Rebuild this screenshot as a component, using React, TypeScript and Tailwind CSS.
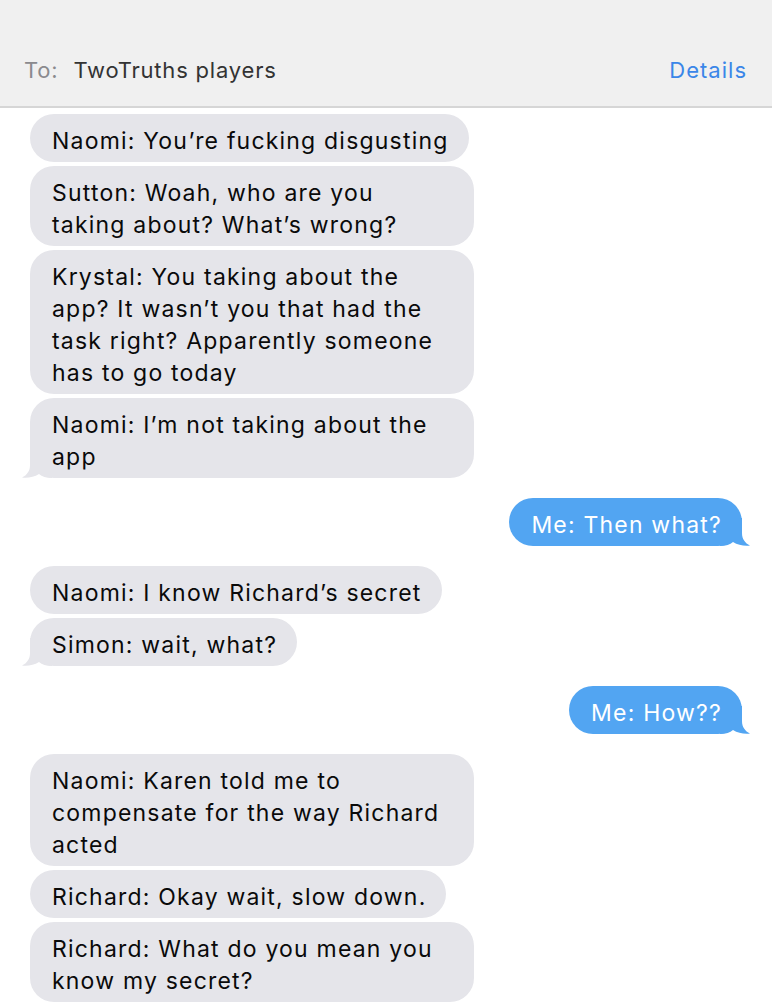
import React from "react";

type Msg = { me?: boolean; lines: string[]; tail?: boolean; wide?: boolean; gapBefore?: boolean };

const msgs: Msg[] = [
  { lines: ["Naomi: You’re fucking disgusting"] },
  { lines: ["Sutton: Woah, who are you", "taking about? What’s wrong?"], wide: true },
  {
    lines: [
      "Krystal: You taking about the",
      "app? It wasn’t you that had the",
      "task right? Apparently someone",
      "has to go today",
    ],
    wide: true,
  },
  { lines: ["Naomi: I’m not taking about the", "app"], wide: true, tail: true },
  { me: true, lines: ["Me: Then what?"], tail: true, gapBefore: true },
  { lines: ["Naomi: I know Richard’s secret"], gapBefore: true },
  { lines: ["Simon: wait, what?"], tail: true },
  { me: true, lines: ["Me: How??"], tail: true, gapBefore: true },
  { lines: ["Naomi: Karen told me to", "compensate for the way Richard", "acted"], wide: true, gapBefore: true },
  { lines: ["Richard: Okay wait, slow down."] },
  { lines: ["Richard: What do you mean you", "know my secret?"], wide: true },
];

function Tail({ me }: { me?: boolean }) {
  const color = me ? "#52a5f2" : "#e5e5ea";
  return (
    <svg
      width="30"
      height="28"
      viewBox="0 0 30 28"
      className={me ? "absolute bottom-0 right-[-8px] scale-x-[-1]" : "absolute bottom-0 left-[-8px]"}
    >
      <path
        d="M8 0 L8 15 C8 21 5 25 0 27.6 C6 28.4 12 27 17 24 C20 26.5 24 28 30 28 L30 0 Z"
        fill={color}
      />
    </svg>
  );
}

function Bubble({ m }: { m: Msg }) {
  return (
    <div className={`flex ${m.me ? "justify-end pr-[30px]" : "justify-start pl-[30px]"} ${m.gapBefore ? "mt-[20px]" : "mt-[4px]"}`}>
      <div
        className={`relative rounded-[24px] pl-[22px] pr-[20px] py-[8px] ${m.wide ? "w-[444px]" : ""} ${
          m.me ? "bg-[#52a5f2] text-white" : "bg-[#e5e5ea] text-[#0a0a0a]"
        }`}
      >
        {m.tail && <Tail me={m.me} />}
        <div className="relative z-10 text-[23px] leading-[32px] tracking-[1.2px] pt-[3px] -mb-[3px]">
          {m.lines.map((l, i) => (
            <div key={i} className="whitespace-nowrap">
              {l}
            </div>
          ))}
        </div>
      </div>
    </div>
  );
}

export default function App() {
  return (
    <div className="w-[772px] h-[1006px] overflow-hidden bg-white" style={{ fontFamily: 'Inter, "Liberation Sans", sans-serif' }}>
      <div className="h-[108px] bg-[#f0f0f0] border-b-2 border-[#d6d6d6] flex items-end justify-between pb-[22px] pl-[24px] pr-[25px]">
        <div className="flex items-center text-[22px] leading-[28px] tracking-[0.8px]">
          <span className="text-[#8a8a8e]">To:</span>
          <span className="ml-[15px] text-[#333333]">TwoTruths players</span>
        </div>
        <div className="text-[22px] leading-[28px] tracking-[1px] text-[#3a86e8]">Details</div>
      </div>
      <div className="pt-[2px]">
        {msgs.map((m, i) => (
          <Bubble key={i} m={m} />
        ))}
      </div>
    </div>
  );
}
